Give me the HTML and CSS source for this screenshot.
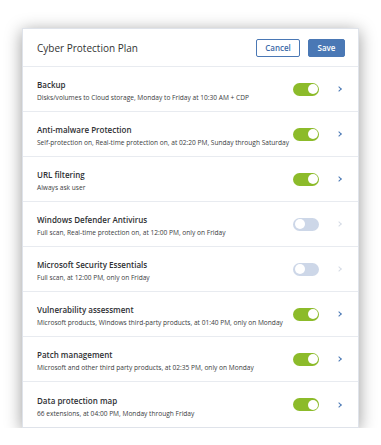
FILE: index.html
```html
<!DOCTYPE html>
<html>
<head>
<meta charset="utf-8">
<link rel="stylesheet" href="styles.css">
</head>
<body>
<div class="card">
  <div class="header">
    <div class="title">Cyber Protection Plan</div>
    <div class="actions">
      <button class="btn btn-cancel">Cancel</button>
      <button class="btn btn-save">Save</button>
    </div>
  </div>
  <div class="row">
    <div class="text"><div class="name">Backup</div><div class="desc">Disks/volumes to Cloud storage, Monday to Friday at 10:30 AM + CDP</div></div>
    <span class="toggle on"></span><span class="chev"></span>
  </div>
  <div class="row">
    <div class="text"><div class="name">Anti-malware Protection</div><div class="desc">Self-protection on, Real-time protection on, at 02:20 PM, Sunday through Saturday</div></div>
    <span class="toggle on"></span><span class="chev"></span>
  </div>
  <div class="row">
    <div class="text"><div class="name">URL filtering</div><div class="desc">Always ask user</div></div>
    <span class="toggle on"></span><span class="chev"></span>
  </div>
  <div class="row">
    <div class="text"><div class="name">Windows Defender Antivirus</div><div class="desc">Full scan, Real-time protection on, at 12:00 PM, only on Friday</div></div>
    <span class="toggle off"></span><span class="chev dim"></span>
  </div>
  <div class="row">
    <div class="text"><div class="name">Microsoft Security Essentials</div><div class="desc">Full scan, at 12:00 PM, only on Friday</div></div>
    <span class="toggle off"></span><span class="chev dim"></span>
  </div>
  <div class="row">
    <div class="text"><div class="name">Vulnerability assessment</div><div class="desc">Microsoft products, Windows third-party products, at 01:40 PM, only on Monday</div></div>
    <span class="toggle on"></span><span class="chev"></span>
  </div>
  <div class="row">
    <div class="text"><div class="name">Patch management</div><div class="desc">Microsoft and other third party products, at 02:35 PM, only on Monday</div></div>
    <span class="toggle on"></span><span class="chev"></span>
  </div>
  <div class="row">
    <div class="text"><div class="name">Data protection map</div><div class="desc">66 extensions, at 04:00 PM, Monday through Friday</div></div>
    <span class="toggle on"></span><span class="chev"></span>
  </div>
</div>
</body>
</html>
```
FILE: styles.css
```css
html, body {
  margin: 0;
  padding: 0;
  background: #ffffff;
  font-family: "Open Sans", "Noto Sans", sans-serif;
}
.card {
  margin: 28px 0 0 22px;
  width: 337px;
  border: 1px solid #dfe3ea;
  background: #fff;
  box-shadow: 0 3px 16px rgba(0, 0, 0, 0.4);
  box-sizing: border-box;
}
.header {
  height: 38px;
  display: flex;
  align-items: center;
  justify-content: space-between;
  padding: 0 13px 0 14px;
  border-bottom: 1px solid #e8ebf0;
  box-sizing: border-box;
}
.title {
  font-size: 10px;
  color: #333;
}
.actions {
  display: flex;
  gap: 8px;
}
.btn {
  height: 18px;
  font-family: "Open Sans", sans-serif;
  font-size: 8px;
  font-weight: 600;
  border-radius: 2px;
  padding: 0;
  box-sizing: border-box;
}
.btn-cancel {
  width: 44px;
  background: #fff;
  color: #3c6aa8;
  border: 1px solid #4a78b5;
}
.btn-save {
  width: 37px;
  background: #4a78b5;
  color: #fff;
  border: 1px solid #4a78b5;
}
.row {
  height: 45px;
  display: flex;
  align-items: center;
  padding: 0 0 0 14px;
  border-bottom: 1px solid #e8ebf0;
  box-sizing: border-box;
}
.row:last-child {
  border-bottom: none;
}
.text {
  flex: 1;
  padding-top: 4px;
}
.name {
  font-size: 8px;
  font-weight: 600;
  color: #2e3033;
  line-height: 13px;
}
.desc {
  font-size: 6.6px;
  color: #3a3c40;
  line-height: 13px;
  white-space: nowrap;
}
.toggle {
  width: 26px;
  height: 13px;
  border-radius: 7px;
  position: relative;
  flex: none;
  margin-right: 18px;
}
.toggle.on { background: #8cbb2a; }
.toggle.off { background: #cdd7e8; }
.toggle::after {
  content: "";
  position: absolute;
  top: 1.5px;
  width: 10px;
  height: 10px;
  border-radius: 50%;
  background: #fff;
}
.toggle.on::after { right: 1.5px; }
.toggle.off::after { left: 1.5px; }
.chev {
  width: 3px;
  height: 3px;
  border-right: 1.2px solid #4a78b5;
  border-top: 1.2px solid #4a78b5;
  transform: rotate(45deg);
  margin-right: 17px;
  flex: none;
}
.chev.dim {
  border-color: #d5dbe5;
}
```
